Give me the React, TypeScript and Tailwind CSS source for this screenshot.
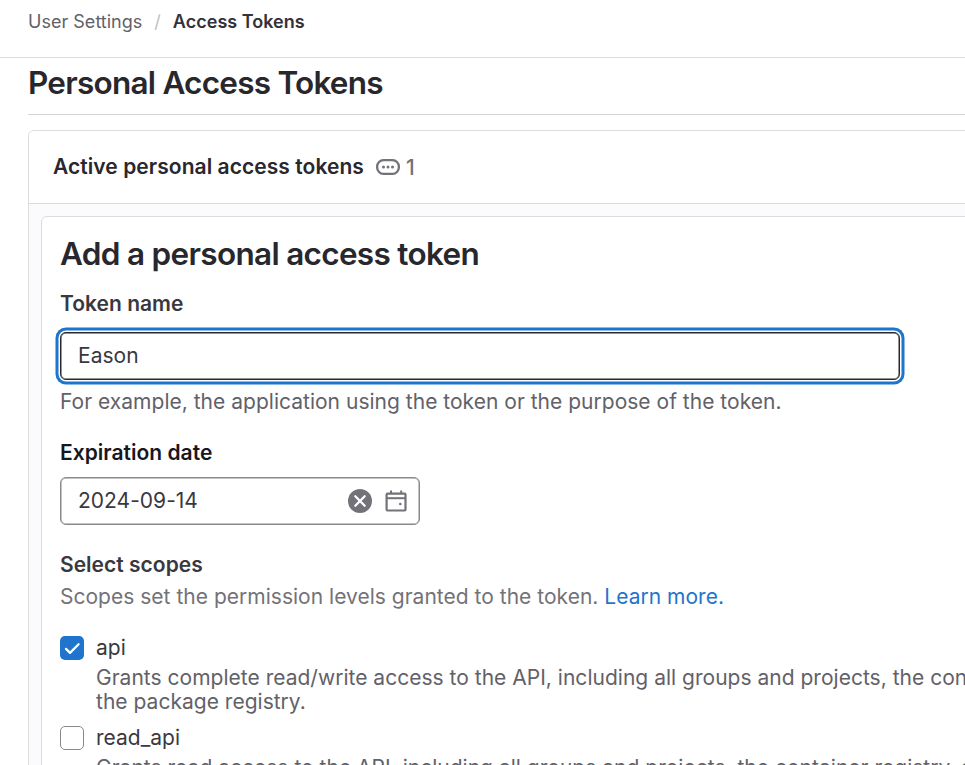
import React from "react";

function TokenIcon() {
  return (
    <svg className="h-6 w-6 shrink-0" viewBox="0 0 24 24" fill="none">
      <rect x="1.15" y="5.15" width="21.7" height="13.7" rx="6.3" stroke="#737278" strokeWidth="2.3" />
      <circle cx="7.5" cy="12" r="1.5" fill="#737278" />
      <circle cx="12" cy="12" r="1.5" fill="#737278" />
      <circle cx="16.5" cy="12" r="1.5" fill="#737278" />
    </svg>
  );
}

function ClearIcon() {
  return (
    <svg className="h-6 w-6 shrink-0" viewBox="0 0 24 24" fill="none">
      <circle cx="12" cy="12" r="12" fill="#737278" />
      <path d="M7.3 7.3l9.4 9.4M16.7 7.3l-9.4 9.4" stroke="#fff" strokeWidth="2.25" strokeLinecap="round" />
    </svg>
  );
}

function CalendarIcon() {
  return (
    <svg className="h-6 w-6 shrink-0" viewBox="0 0 24 24" fill="none" stroke="#737278">
      <rect x="2.6" y="4.6" width="18.9" height="16.9" rx="0.9" strokeWidth="2.2" />
      <path d="M2.6 9.2h18.9" strokeWidth="2" />
      <path d="M7 1.5v3M17.2 1.5v3" strokeWidth="2" />
      <circle cx="16.3" cy="15" r="1.3" fill="#737278" stroke="none" />
    </svg>
  );
}

function Checkbox({ checked }: { checked?: boolean }) {
  return checked ? (
    <span className="flex h-6 w-6 shrink-0 items-center justify-center rounded-[5px] bg-[#1f75cb]">
      <svg className="h-6 w-6" viewBox="0 0 24 24" fill="none">
        <path d="M6 12.9l4 4 8.6-8.7" stroke="#fff" strokeWidth="2.25" strokeLinecap="round" strokeLinejoin="round" />
      </svg>
    </span>
  ) : (
    <span className="h-6 w-6 shrink-0 rounded-[5px] border border-[#89888d] bg-white" />
  );
}

function Scope({ name, checked, lines }: { name: string; checked?: boolean; lines: string[] }) {
  return (
    <div className="mb-3">
      <div className="flex items-center gap-3">
        <Checkbox checked={checked} />
        <span>{name}</span>
      </div>
      <div className="mt-1.5 ml-9 text-[#626168]">
        {lines.map((line) => (
          <p key={line}>{line}</p>
        ))}
      </div>
    </div>
  );
}

export default function App() {
  return (
    <div className="h-[765px] w-full overflow-hidden bg-white font-['Inter','Noto_Sans',sans-serif] text-[21px] leading-6 tracking-[0.015px] whitespace-nowrap text-[#3a383f]">
      <header className="flex h-[58px] items-start border-b border-[#dcdcde] pt-[10px] pl-7 text-[18px]">
        <span className="text-[#626168]">User Settings</span>
        <span className="mx-3 text-[#bfbfc3]">/</span>
        <span className="font-semibold tracking-[0.02px] text-[#333238]">Access Tokens</span>
      </header>
      <main className="pl-7">
        <h1 className="flex h-[57px] items-center border-b border-[#d4d4d7] pb-[6px] text-[31.5px] font-semibold tracking-[-0.76px] text-[#28272d]">
          Personal Access Tokens
        </h1>
        <section className="mt-[15px] w-[1200px] rounded-[6px] border border-[#dcdcde] bg-[#fbfafd]">
          <div className="flex h-[73px] items-center rounded-t-[5px] border-b border-[#dcdcde] bg-white pl-6">
            <h2 className="font-semibold tracking-[0.06px] text-[#28272d]">Active personal access tokens</h2>
            <span className="ml-3 flex items-center gap-1.5 text-[#737278]">
              <TokenIcon />
              <span className="pt-0.5 font-medium">1</span>
            </span>
          </div>
          <div className="mt-3 ml-3 h-[700px] rounded-[6px] border border-[#dcdcde] bg-white pl-[18px]">
            <h3 className="mt-[17px] text-[31.5px] leading-10 font-semibold tracking-[-0.69px] text-[#28272d]">
              Add a personal access token
            </h3>
            <div className="mt-[18px] font-semibold">Token name</div>
            <div className="mt-4 flex h-12 w-[840px] items-center rounded-[6px] border-[1.5px] border-[#28272d] pl-[17px] shadow-[inset_0_0_0_0.5px_#28272d,0_0_0_1.5px_#fff,0_0_0_4.5px_#1f75cb]">
              Eason
            </div>
            <p className="mt-[10px] text-[#626168]">
              For example, the application using the token or the purpose of the token.
            </p>
            <div className="mt-[27px] font-semibold text-[#18171d]">Expiration date</div>
            <div className="mt-3 flex h-12 w-[360px] items-center rounded-[6px] border border-[#89888d] pr-[11px] pl-[17px] shadow-[inset_0_0_0_0.5px_#89888d]">
              <span className="flex-1">2024-09-14</span>
              <ClearIcon />
              <span className="ml-3 flex">
                <CalendarIcon />
              </span>
            </div>
            <div className="mt-7 font-semibold">Select scopes</div>
            <p className="mt-2 mb-[27px] text-[#737278]">
              Scopes set the permission levels granted to the token. <a className="text-[#1f75cb]">Learn more.</a>
            </p>
            <Scope
              name="api"
              checked
              lines={[
                "Grants complete read/write access to the API, including all groups and projects, the container registry, the dependency proxy, and",
                "the package registry.",
              ]}
            />
            <Scope
              name="read_api"
              lines={[
                "Grants read access to the API, including all groups and projects, the container registry, and the package registry.",
              ]}
            />
          </div>
        </section>
      </main>
    </div>
  );
}
